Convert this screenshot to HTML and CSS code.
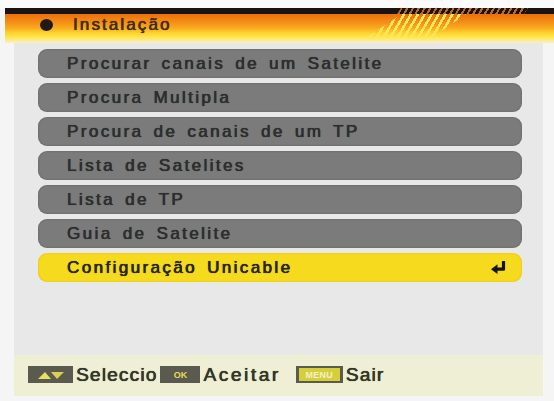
FILE: index.html
```html
<!DOCTYPE html>
<html lang="pt">
<head>
<meta charset="utf-8">
<title>Instalação</title>
<link rel="stylesheet" href="styles.css">
</head>
<body>
<div class="screen">
  <div class="top-strip"></div>
  <header class="header">
    <div class="header-line"></div>
    <div class="header-bar">
      <span class="bullet"></span>
      <span class="title">Instalação</span>
    </div>
    <div class="hatch-line"></div>
    <div class="hatch-bar"></div>
  </header>
  <main class="panel">
    <ul class="menu">
      <li class="item">Procurar canais de um Satelite</li>
      <li class="item">Procura Multipla</li>
      <li class="item">Procura de canais de um TP</li>
      <li class="item">Lista de Satelites</li>
      <li class="item">Lista de TP</li>
      <li class="item">Guia de Satelite</li>
      <li class="item active">
        <span>Configuração Unicable</span>
        <svg class="enter" viewBox="0 0 18 13" width="18" height="13">
          <path d="M13.5 1 V8.2 H6" fill="none" stroke="#141414" stroke-width="3.2" stroke-linejoin="round" stroke-linecap="round"/>
          <path d="M1 8.2 L7.5 3.2 L7.5 13 Z" fill="#141414"/>
        </svg>
      </li>
    </ul>
    <footer class="footer">
      <span class="key key-nav">
        <svg viewBox="0 0 30 10" width="30" height="10">
          <path d="M2 9 L9 2 L15 9 Z" fill="#e8e060"/>
          <path d="M15 2 L28 2 L21 9 Z" fill="#d8d050"/>
        </svg>
      </span>
      <span class="label">Seleccio</span>
      <span class="key key-ok">OK</span>
      <span class="label label-wide">Aceitar</span>
      <span class="key key-menu"><span>MENU</span></span>
      <span class="label">Sair</span>
    </footer>
  </main>
</div>
</body>
</html>
```

FILE: styles.css
```css
* { box-sizing: border-box; }

html, body {
  margin: 0;
  padding: 0;
  background: #f6f6f6;
}

.screen {
  width: 554px;
  height: 401px;
  overflow: hidden;
  background: #f5f5f5;
  font-family: "Liberation Sans", Arial, sans-serif;
}

.top-strip {
  height: 8px;
  background: #fbfbfb;
}

.header {
  position: relative;
  margin-left: 5px;
  height: 35px;
}

.header-line {
  height: 6px;
  background: #1a1410;
}

.header-bar {
  height: 29px;
  display: flex;
  align-items: flex-start;
  padding-left: 35px;
  padding-top: 2px;
  background: linear-gradient(to bottom, #ea700c 0%, #f38a16 25%, #f9aa20 48%, #fdd02a 64%, #ffe650 80%, #f7f0c8 100%);
}

.bullet {
  width: 13px;
  height: 12px;
  margin-top: 3px;
  border-radius: 50%;
  background: #201a14;
}

.title {
  margin-left: 20px;
  font-size: 17px;
  line-height: 18px;
  letter-spacing: 2.1px;
  color: #4a2c12;
  text-shadow: 0.3px 0 0 #4a2c12, 0 0 0.8px #4a2c12;
}

.hatch-line {
  position: absolute;
  left: 392px;
  top: 0;
  width: 131px;
  height: 6px;
  background: repeating-linear-gradient(120deg, #1a1410 0px, #1a1410 3px, #b8682c 3px, #b8682c 5px);
  clip-path: polygon(4px 0, 100% 0, calc(100% - 4px) 100%, 0 100%);
}

.hatch-bar {
  position: absolute;
  left: 359px;
  top: 6px;
  width: 102px;
  height: 25px;
  background: repeating-linear-gradient(120deg, rgba(255, 236, 80, 0) 0px, rgba(255, 236, 80, 0) 3.5px, #ffe85a 3.5px, #ffe85a 6px);
  clip-path: polygon(38px 0, 100% 0, calc(100% - 36px) 100%, 0 100%);
}

.panel {
  margin: 0 11px 0 14px;
  height: 353px;
  background: #e8e8e8;
  display: flex;
  flex-direction: column;
  padding-top: 6px;
}

.menu {
  list-style: none;
  margin: 0 21px 0 24px;
  padding: 0;
  display: flex;
  flex-direction: column;
  gap: 5px;
}

.item {
  height: 29px;
  border-radius: 9px;
  background: #7b7b7b;
  box-shadow: inset 0 0 2px rgba(60, 60, 60, 0.5);
  padding-left: 29px;
  padding-right: 14px;
  display: flex;
  align-items: center;
  justify-content: space-between;
  font-size: 17px;
  letter-spacing: 2.4px;
  word-spacing: 3px;
  color: #2e2e2e;
  text-shadow: 0.35px 0 0 #2e2e2e, 0 0 0.8px #2e2e2e;
}

.item.active {
  background: #f5da1e;
  box-shadow: inset 0 0 2px rgba(200, 170, 0, 0.5);
  color: #2a2410;
  text-shadow: 0.35px 0 0 #2a2410, 0 0 0.8px #2a2410;
}

.enter {
  display: block;
}

.footer {
  margin-top: auto;
  height: 41px;
  background: #efefd6;
  display: flex;
  align-items: center;
  padding-left: 14px;
  padding-bottom: 2px;
}

.key {
  height: 17px;
  background: #5a5a4e;
  display: flex;
  align-items: center;
  justify-content: center;
}

.key-nav {
  width: 45px;
}

.key-nav svg {
  display: block;
}

.key-ok {
  width: 40px;
  margin-left: 3px;
  font-size: 9px;
  font-weight: bold;
  color: #e4dc5c;
}

.key-menu {
  width: 47px;
  margin-left: 15px;
  padding: 2px 3px;
}

.key-menu span {
  width: 100%;
  height: 100%;
  background: #d6cf3c;
  color: #f4f0c8;
  font-size: 9px;
  font-weight: bold;
  display: flex;
  align-items: center;
  justify-content: center;
  letter-spacing: 0.3px;
}

.label {
  margin-left: 3px;
  font-size: 19px;
  letter-spacing: 1.2px;
  color: #363626;
  text-shadow: 0.4px 0 0 #363626, 0 0 0.8px #363626;
}

.label-wide {
  letter-spacing: 2.6px;
}
```
